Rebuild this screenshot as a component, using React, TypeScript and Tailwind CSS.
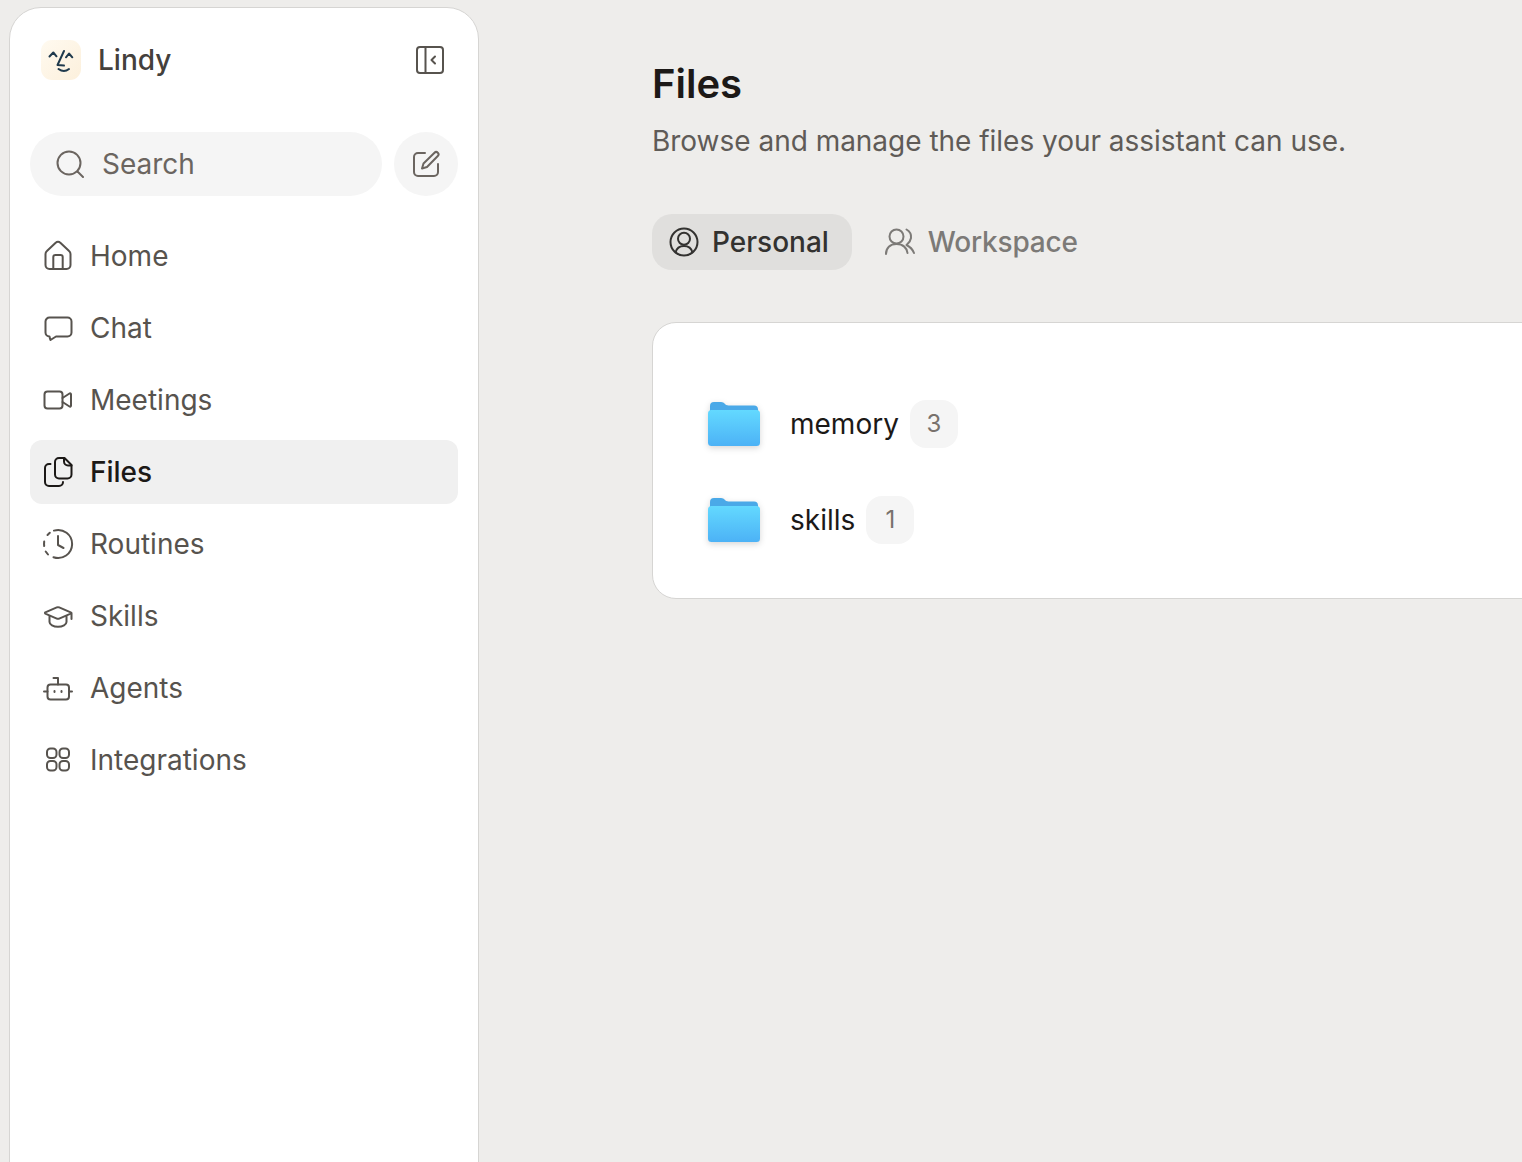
const stroke = {
  fill: "none",
  stroke: "currentColor",
  strokeWidth: 2,
  strokeLinecap: "round" as const,
  strokeLinejoin: "round" as const,
};

function Icon({ children, size = 32 }: { children: React.ReactNode; size?: number }) {
  return (
    <svg width={size} height={size} viewBox={`0 0 ${size} ${size}`} className="shrink-0" {...stroke}>
      {children}
    </svg>
  );
}

const nav = [
  {
    label: "Home",
    icon: (
      <>
        <path d="M3.500 14c0-1.200.5-2.300 1.400-3.100l8.500-8a3.900 3.900 0 0 1 5.200 0l8.500 8c.9.8 1.400 1.900 1.400 3.100v11a4 4 0 0 1-4 4H7.500a4 4 0 0 1-4-4z" />
        <path d="M11.300 29V17a2 2 0 0 1 2-2h5.400a2 2 0 0 1 2 2v12" />
      </>
    ),
  },
  {
    label: "Chat",
    icon: <path d="M7.500 5.500h18a4 4 0 0 1 4 4v11a4 4 0 0 1-4 4H14l-5.500 3.500c-.5-1-.8-2.500-1-3.500a4 4 0 0 1-4-4v-11a4 4 0 0 1 4-4z" />,
  },
  {
    label: "Meetings",
    icon: (
      <>
        <rect x="2.500" y="7.500" width="18" height="17" rx="3" />
        <path d="M20.500 14l7-4.500a1 1 0 0 1 1.500.8v11.400a1 1 0 0 1-1.500.8l-7-4.500" />
      </>
    ),
  },
  {
    label: "Files",
    active: true,
    icon: (
      <>
        <path d="M13 6a4 4 0 0 1 4-4h5.500l7 7v9.500a4 4 0 0 1-4 4H17a4 4 0 0 1-4-4z" />
        <path d="M22 2v3.500a4 4 0 0 0 4 4h3.500" />
        <path d="M8.500 8H7a4 4 0 0 0-4 4v14a4 4 0 0 0 4 4h10a4 4 0 0 0 4-4" />
      </>
    ),
  },
  {
    label: "Routines",
    icon: (
      <>
        <path d="M12 2.600a14 14 0 1 1-.5 26.600" />
        <path d="M16 8v9l5.500 3" />
        <path d="M5.500 7l2.300-2.300" />
        <path d="M2.200 13.500c-.2 1.500-.2 3 0 4.500" />
        <path d="M3.700 23.500l2.300 3" />
      </>
    ),
  },
  {
    label: "Skills",
    icon: (
      <>
        <path d="M14.800 7.400a3 3 0 0 1 2.400 0l11.500 5a.7.7 0 0 1 0 1.200l-11.500 5a3 3 0 0 1-2.400 0l-11.500-5a.7.7 0 0 1 0-1.200z" />
        <path d="M7.500 16.500V22c0 2.400 3.800 4.800 8.500 4.800s8.500-2.400 8.500-4.800v-5.500" />
        <path d="M29.500 13v6" />
      </>
    ),
  },
  {
    label: "Agents",
    icon: (
      <>
        <rect x="5.500" y="12.500" width="21.500" height="15" rx="3" />
        <path d="M16 12.500V6h-4.500" />
        <path d="M2 19.500h3.500M27 19.500h3" />
        <path d="M12.500 19v1M19.500 19v1" />
      </>
    ),
  },
  {
    label: "Integrations",
    icon: (
      <>
        <rect x="5" y="4.500" width="9.500" height="9.500" rx="3.500" />
        <rect x="17.500" y="4.500" width="9.500" height="9.500" rx="3.500" />
        <rect x="5" y="17" width="9.500" height="9.500" rx="3.500" />
        <rect x="17.500" y="17" width="9.500" height="9.500" rx="3.500" />
      </>
    ),
  },
];

function Logo() {
  return (
    <div className="w-10 h-10 rounded-[11px] bg-gradient-to-br from-[#fffaf0] to-[#fcf0dc] shrink-0">
      <svg width="40" height="40" viewBox="0 0 40 40" fill="none" stroke="#1f3a4d" strokeWidth="2" strokeLinecap="round" strokeLinejoin="round">
        <path d="M8.500 16.500l3.800-4 3.200 3.800" />
        <path d="M23 11l-6.500 14 6.500.6" />
        <path d="M25 17.300l3-3.800 3.300 3.800" />
        <path d="M17.500 29q5.500 4 10.500 0" />
      </svg>
    </div>
  );
}

function Folder() {
  return (
    <svg width="52" height="48" viewBox="0 0 52 48" className="shrink-0 drop-shadow-[0_2px_3px_rgba(0,0,0,0.16)]">
      <defs>
        <linearGradient id="folderFront" x1="0" y1="0" x2="0" y2="1">
          <stop offset="0" stopColor="#63d9ff" />
          <stop offset="1" stopColor="#4cb2f6" />
        </linearGradient>
      </defs>
      <path d="M2 6a4 4 0 0 1 4-4h7c3.500 0 4 3.500 7.500 3.500H46a4 4 0 0 1 4 4V20H2z" fill="#4aa9e8" />
      <rect x="0" y="10" width="52" height="36" rx="3.500" fill="url(#folderFront)" />
    </svg>
  );
}

function FolderRow({ name, count }: { name: string; count: number }) {
  return (
    <div className="flex items-center py-6 pl-[55px]">
      <Folder />
      <span className="ml-[30px] text-[28px] leading-[36px] text-[#1c1917]">{name}</span>
      <span className="ml-[11px] w-12 h-12 rounded-2xl bg-[#f5f5f5] flex items-center justify-center text-2xl text-[#78716c]">
        {count}
      </span>
    </div>
  );
}

export default function App() {
  return (
    <div className="h-screen overflow-hidden bg-[#eeedeb] flex pl-[9px] pt-[7px] font-['Inter',sans-serif]">
      <aside className="w-[470px] shrink-0 bg-white border border-[#d6d5d3] rounded-t-[32px] px-5 pt-[32px] -mb-10">
        <div className="flex items-center justify-between pl-[11px] pr-[14px]">
          <div className="flex items-center gap-[17px]">
            <Logo />
            <span className="text-[28px] leading-10 font-medium text-[#44403c]">Lindy</span>
          </div>
          <svg width="28" height="28" viewBox="0 0 28 28" {...stroke} className="text-[#57534e]">
            <rect x="1" y="1" width="26" height="26" rx="3" />
            <path d="M9.500 1v26" />
            <path d="M19 10.500L15.500 14l3.500 3.500" />
          </svg>
        </div>

        <div className="flex items-center gap-3 mt-[52px]">
          <div className="flex-1 h-16 rounded-full bg-[#f5f5f5] flex items-center gap-[18px] pl-[26px] text-[#6b6560]">
            <svg width="28" height="28" viewBox="0 0 28 28" {...stroke}>
              <circle cx="13" cy="13" r="11.500" />
              <path d="M21.500 21.500L27 27" />
            </svg>
            <span className="text-[28px]">Search</span>
          </div>
          <div className="w-16 h-16 rounded-full bg-[#f5f5f5] flex items-center justify-center text-[#6b6560]">
            <svg width="28" height="28" viewBox="0 0 28 28" {...stroke}>
              <path d="M13 3H6a4 4 0 0 0-4 4v15a4 4 0 0 0 4 4h16a4 4 0 0 0 4-4v-8" />
              <path d="M22.500 2.700a2.300 2.300 0 0 1 3.300 3.300L15 17l-5 1.500L11.500 13.500z" />
            </svg>
          </div>
        </div>

        <nav className="mt-[28px] flex flex-col gap-2">
          {nav.map((item) => (
            <div
              key={item.label}
              className={
                item.active
                  ? "h-16 rounded-xl bg-[#f0f0f0] flex items-center gap-4 px-3 text-[#1c1917] font-medium"
                  : "h-16 rounded-xl flex items-center gap-4 px-3 text-[#57534e]"
              }
            >
              <Icon>{item.icon}</Icon>
              <span className="text-[28px]">{item.label}</span>
            </div>
          ))}
        </nav>
      </aside>

      <main className="flex-1 min-w-0 overflow-hidden pl-[173px] pt-[52px]">
        <h1 className="text-[40px] leading-[50px] font-semibold text-[#1c1917]">Files</h1>
        <p className="mt-3 text-[28px] leading-10 text-[#5f5b57] tracking-[-0.02px]">
          Browse and manage the files your assistant can use.
        </p>

        <div className="flex items-center gap-[12px] mt-[53px]">
          <div className="h-14 rounded-[20px] bg-[#e0dfdd] flex items-center gap-3 pl-4 pr-[23px] text-[#333230]">
            <Icon>
              <circle cx="16" cy="16" r="13.500" />
              <circle cx="16" cy="12.800" r="6" />
              <path d="M7.500 26.500c1-4 4-6.500 8.500-6.500s7.500 2.500 8.500 6.500" />
            </Icon>
            <span className="text-[28px] font-medium">Personal</span>
          </div>
          <div className="h-14 flex items-center gap-[12px] px-5 text-[#7c7a77]">
            <Icon>
              <circle cx="12.500" cy="10.500" r="7" />
              <path d="M2 28c0-6 4-10 10.500-10S23 22 23.500 27" />
              <path d="M22.500 3.500c3.500 2 5 5 4.500 8.500s-2.500 5-4.500 7c3 1.500 6 4 7.500 8" />
            </Icon>
            <span className="text-[28px] font-medium tracking-[-0.2px]">Workspace</span>
          </div>
        </div>

        <section className="w-[1100px] mt-[52px] bg-white border border-[#d6d5d3] rounded-[24px] pt-[53px] pb-[30px]">
          <FolderRow name="memory" count={3} />
          <FolderRow name="skills" count={1} />
        </section>
      </main>
    </div>
  );
}
